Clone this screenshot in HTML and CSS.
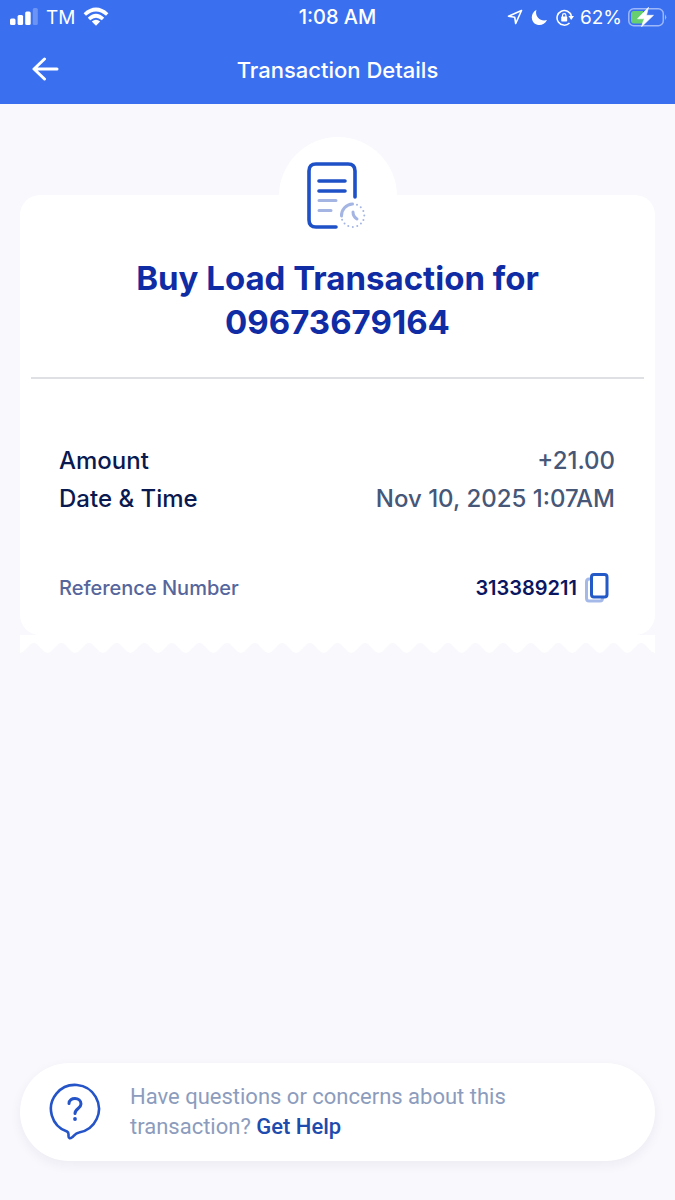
FILE: index.html
```html
<!DOCTYPE html>
<html lang="en">
<head>
<meta charset="utf-8">
<meta name="viewport" content="width=device-width, initial-scale=1">
<title>Transaction Details</title>
<link rel="stylesheet" href="styles.css">
</head>
<body>
<header class="top">
  <div class="status">
    <div class="status-side">
      <svg width="28" height="18" viewBox="0 0 28 18" fill="#fff" aria-hidden="true"><rect y="10.500" width="5.500" height="6.500" rx="1.500"/><rect x="7.600" y="7" width="5.500" height="10" rx="1.500"/><rect x="15.200" y="3.500" width="5.500" height="13.500" rx="1.500"/><rect x="22.800" y="0" width="5" height="17" rx="1.500" opacity=".25"/></svg>
      <span class="carrier">TM</span>
      <svg width="26" height="20" viewBox="0 0 26 20" fill="none" stroke="#fff" stroke-width="3.600" aria-hidden="true"><path d="M1.800 7.500Q13-2.500 24.200 7.500M6 12Q13 5.500 20 12"/><path d="M8.800 14.500Q13 11 17.200 14.500L13 18.800Z" fill="#fff" stroke="none"/></svg>
    </div>
    <time class="clock">1:08 AM</time>
    <div class="status-side status-right">
      <svg width="16" height="16" viewBox="0 0 16 16" fill="none" stroke="#fff" stroke-width="1.600" stroke-linejoin="round" aria-hidden="true"><path d="M14.500 1.500L1.500 7.200L7.700 8.200L8.700 14.500Z"/></svg>
      <svg class="moon" width="17" height="17" viewBox="0 0 17 17" fill="#fff" aria-hidden="true"><path d="M5.500.8C3.500 6.800 8.500 13 16 11C14 15 10 16.800 6.200 15.700C-.5 13.800-1.300 4.500 5.500.8Z"/></svg>
      <svg width="18" height="17" viewBox="0 0 18 17" fill="none" stroke="#fff" stroke-width="1.500" aria-hidden="true"><path d="M13.500 14A7.300 7.300 0 1 1 15.400 7"/><path d="M12.500 7H18L15.200 11Z" fill="#fff" stroke="none"/><rect x="5.200" y="7.500" width="6" height="5" rx=".8" fill="#fff" stroke="none"/><path d="M6.500 8V6.400A1.700 1.700 0 0 1 9.900 6.400V8" stroke-width="1.200"/></svg>
      <span class="percent">62%</span>
      <svg width="39" height="20" viewBox="0 0 39 20" aria-hidden="true"><rect x=".8" y="1.800" width="34.500" height="17" rx="5" fill="none" stroke="#9db7f8" stroke-width="1.500"/><path d="M37 7.500Q39.500 10.300 37 13Z" fill="#9db7f8"/><path d="M6 4H15V16.500H6Q3 16.500 3 13.500V7Q3 4 6 4Z" fill="#68cf70"/><path d="M20.500 .3L9.500 11.800H16L13.500 19.800L25.500 8.300H18.500Z" fill="#fff" stroke="#fff" stroke-width=".6" stroke-linejoin="round"/></svg>
    </div>
  </div>
  <div class="nav">
    <button class="back" type="button" aria-label="Back"><svg width="28" height="24" viewBox="0 0 28 24" fill="none" stroke="#fff" stroke-width="3" stroke-linecap="round" stroke-linejoin="round" aria-hidden="true"><path d="M12.500 2L2 12L12.500 22M2.500 12H25"/></svg></button>
    <h1 class="title">Transaction Details</h1>
  </div>
</header>
<main class="page">
  <section class="receipt">
    <div class="card">
      <div class="badge">
        <svg width="60" height="68" viewBox="0 0 60 68" fill="none" stroke-linecap="round" aria-hidden="true"><path d="M29 65H9Q2 65 2 58V9Q2 2 9 2H41Q48 2 48 9V35" stroke="#1e50c8" stroke-width="3.600"/><path d="M12 19H38M12 29H38" stroke="#1e50c8" stroke-width="3.600"/><path d="M12 38.500H29M12 48.500H24M34.500 54A11.500 11.500 0 0 1 45.500 42M46 50Q46 54.500 50 57" stroke="#a5b5e3" stroke-width="3"/><path d="M50 42.800A11.500 11.500 0 1 1 35 57.500" stroke="#a5b5e3" stroke-width="2" stroke-dasharray="0 4.500"/></svg>
      </div>
      <h2 class="heading">Buy Load Transaction for<br>09673679164</h2>
      <dl class="details">
        <div class="row"><dt>Amount</dt><dd>+21.00</dd></div>
        <div class="row"><dt>Date &amp; Time</dt><dd>Nov 10, 2025 1:07AM</dd></div>
        <div class="row reference"><dt>Reference Number</dt><dd>313389211
          <button class="copy" type="button" aria-label="Copy reference number"><svg width="24" height="30" viewBox="0 0 24 30" fill="none" stroke-width="3" stroke-linejoin="round" aria-hidden="true"><path d="M5 6H4Q1.500 6 1.500 9V25Q1.500 28 4 28H15Q17.500 28 17.500 25" stroke="#a5b9e9"/><rect x="6.500" y="1.500" width="15.500" height="22.500" rx="2.500" stroke="#2459c8"/></svg></button></dd></div>
      </dl>
    </div>
    <svg class="edge" viewBox="0 0 644 18" preserveAspectRatio="none" aria-hidden="true"><defs><pattern id="teeth" width="28" height="18" patternUnits="userSpaceOnUse"><path d="M0 0H28V18Q25 18 23 15L17 9Q14 7 11 9L5 15Q3 18 0 18Z" fill="#fff"/></pattern></defs><rect width="644" height="18" fill="url(#teeth)"/></svg>
  </section>
  <aside class="help">
    <svg class="help-icon" width="52" height="58" viewBox="0 0 52 58" fill="none" stroke="#2454c7" stroke-width="2.600" stroke-linecap="round" stroke-linejoin="round" aria-hidden="true"><path d="M18 48.500A24 24 0 1 1 30 49.500C26.500 50 25.500 52 23.500 54Q19.500 57 19.500 53C19.500 50.500 20 49.500 18 48.500Z"/><path d="M20 20.500C20 13.800 32 13.800 32 21C32 25.500 26 25.500 26 30.500" stroke-width="3"/><circle cx="26" cy="36" r="1.900" fill="#2454c7" stroke="none"/></svg>
    <p class="help-text">Have questions or concerns about this transaction? <a href="#help">Get Help</a></p>
  </aside>
</main>
</body>
</html>
```
FILE: styles.css
```css
* { box-sizing: border-box; }
body {
  margin: 0;
  min-height: 100vh;
  display: flex;
  flex-direction: column;
  background: #f8f8fd;
  font-family: Inter, "Liberation Sans", sans-serif;
}
h1, h2, p, dl, dd { margin: 0; }
button { padding: 0; border: 0; background: none; cursor: pointer; }
svg { display: block; flex: none; }

.top { background: #3a70f0; color: #fff; }
.status {
  display: grid;
  grid-template-columns: 1fr auto 1fr;
  align-items: center;
  height: 34px;
  padding: 0 10px;
  font-size: 19px;
}
.status-side { display: flex; align-items: center; gap: 8px; }
.status-right { justify-content: flex-end; gap: 6px; margin-right: -2px; }
.moon { margin: 0 2px; }
.clock { font-size: 20px; font-weight: 500; }
.nav {
  display: grid;
  grid-template-columns: 28px 1fr 28px;
  align-items: center;
  height: 70px;
  padding: 0 32px;
}
.title {
  padding-top: 2px;
  font-size: 22px;
  font-weight: 500;
  text-align: center;
}

.page {
  flex: 1;
  display: flex;
  flex-direction: column;
  justify-content: space-between;
  padding: 91px 20px 39px;
}
.card {
  display: flow-root;
  padding: 0 11px 28px;
  border-radius: 20px;
  background: #fff;
}
.badge {
  width: 118px;
  height: 118px;
  margin: -58px auto 0;
  padding: 25px 0 0 28px;
  border-radius: 50%;
  background: #fff;
}
.heading {
  padding: 1px 0 33px;
  border-bottom: 2px solid #dfe0e3;
  color: #102ca5;
  font-size: 33px;
  font-weight: 700;
  line-height: 44px;
  text-align: center;
}
.details { padding: 62px 29px 0 28px; }
.row {
  display: flex;
  justify-content: space-between;
  align-items: center;
  min-height: 38px;
  font-size: 24px;
  font-weight: 500;
}
.row dt { color: #0a194f; }
.row dd { color: #465778; }
.reference { margin-top: 52px; font-size: 20px; }
.reference dt { color: #56669c; }
.reference dd {
  display: flex;
  align-items: center;
  gap: 8px;
  margin-right: 6px;
  color: #0a1660;
  font-weight: 600;
}
.edge { width: 100%; height: 18px; }

.help {
  display: flex;
  align-items: center;
  gap: 29px;
  min-height: 98px;
  padding: 0 100px 0 29px;
  border-radius: 49px;
  background: #fff;
  box-shadow: 0 4px 12px rgba(30, 30, 60, 0.06);
}
.help-text {
  color: #8c9cbd;
  font-family: Roboto, sans-serif;
  font-size: 22px;
  line-height: 30px;
}
.help-text a { color: #1d4cae; font-weight: 500; text-decoration: none; }
```
